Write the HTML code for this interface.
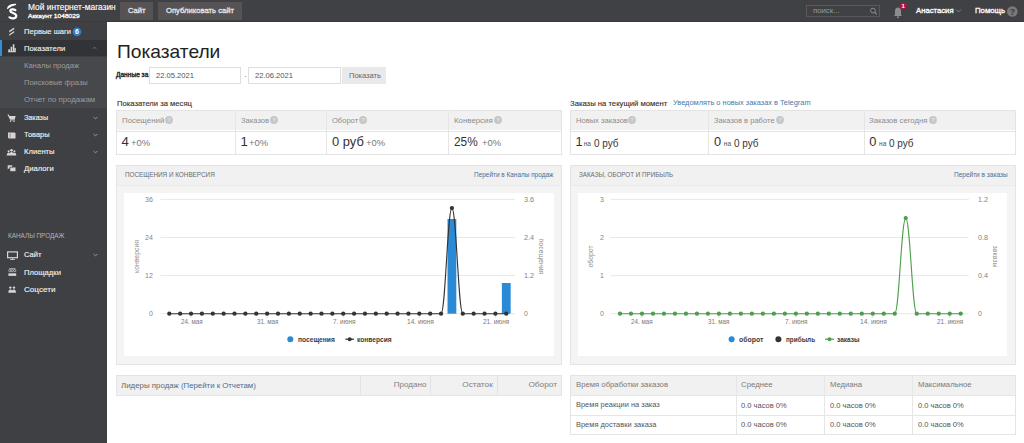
<!DOCTYPE html>
<html><head><meta charset="utf-8"><style>
html,body{margin:0;padding:0;width:1024px;height:443px;overflow:hidden;background:#fff;font-family:"Liberation Sans", sans-serif;}
.r{position:absolute;}
.t{position:absolute;white-space:nowrap;line-height:1;display:block;}
</style></head><body>
<div class="r" style="left:0.00px;top:0.00px;width:1024.00px;height:22.30px;background:#404145;"></div>
<div class="r" style="left:0.00px;top:21.30px;width:1024.00px;height:1.00px;background:#393a3d;"></div>
<div class="r" style="left:0.00px;top:22.00px;width:107.40px;height:421.00px;background:#3f4044;"></div>
<svg class="r" style="left:0;top:0" width="24" height="22"><path d="M7.6 8.4 Q8.6 4.2 15.6 4.3 Q10.8 5.4 7.6 8.4 Z" stroke="#fff" stroke-width="1.2" fill="#fff" stroke-linejoin="round"/><path d="M15.4 10.1 C14 9.1 10.3 9 10.3 11.1 C10.3 13.3 16.3 12.9 16.3 15.8 C16.3 18.9 11.2 18.9 9.5 17.3" stroke="#fff" stroke-width="2.2" fill="none" stroke-linecap="round"/></svg>
<span id="t1" class="t" style="left:27.75px;transform-origin:left;top:4.06px;font-size:8.20px;color:#fff;font-weight:400;transform:scaleX(1.0231);-webkit-text-stroke:0.12px #fff;">Мой интернет-магазин</span>
<span id="t2" class="t" style="left:27.75px;transform-origin:left;top:12.75px;font-size:6.20px;color:#fff;font-weight:400;transform:scaleX(1.0715);-webkit-text-stroke:0.3px #fff;">Аккаунт 1048029</span>
<div class="r" style="left:120.00px;top:2.00px;width:33.00px;height:18.00px;background:#575355;"></div>
<div class="r" style="left:158.00px;top:2.00px;width:84.00px;height:18.00px;background:#575355;"></div>
<span id="t3" class="t" style="left:128.00px;transform-origin:left;top:6.97px;font-size:7.60px;color:#e6e6e6;font-weight:400;transform:scaleX(1.0048);-webkit-text-stroke:0.3px #e6e6e6;">Сайт</span>
<span id="t4" class="t" style="left:166.00px;transform-origin:left;top:6.97px;font-size:7.60px;color:#e6e6e6;font-weight:400;transform:scaleX(1.0087);-webkit-text-stroke:0.3px #e6e6e6;">Опубликовать сайт</span>
<div class="r" style="left:806.30px;top:5.00px;width:73.30px;height:12.00px;background:transparent;border:1px solid #59595b;box-sizing:border-box;"></div>
<span id="t5" class="t" style="left:813.00px;transform-origin:left;top:7.27px;font-size:7.00px;color:#9a9a9a;font-weight:400;transform:scaleX(1.1083);">поиск...</span>
<svg class="r" style="left:868px;top:5px" width="12" height="12"><circle cx="5" cy="5.6" r="2.4" stroke="#8a8a8a" stroke-width="1" fill="none"/><path d="M6.8 7.4 L8.8 9.4" stroke="#8a8a8a" stroke-width="1.2"/></svg>
<svg class="r" style="left:890px;top:2px" width="20" height="18"><path d="M4 14 L5 12.5 L5 9 Q5 5.5 8 5.5 Q11 5.5 11 9 L11 12.5 L12 14 Z" fill="#8c8c8c"/><circle cx="8" cy="15.2" r="1" fill="#8c8c8c"/><circle cx="13.2" cy="4" r="3.6" fill="#a8193d"/><text x="13.2" y="6.2" font-size="6" font-weight="700" fill="#fff" text-anchor="middle" font-family="Liberation Sans">1</text></svg>
<span id="t6" class="t" style="left:916.30px;transform-origin:left;top:7.47px;font-size:7.60px;color:#fff;font-weight:400;transform:scaleX(1.0149);-webkit-text-stroke:0.3px #fff;">Анастасия</span>
<svg class="r" style="left:955px;top:8px" width="8" height="6"><path d="M1 1.5 L3.5 4 L6 1.5" stroke="#888" stroke-width="0.9" fill="none"/></svg>
<span id="t7" class="t" style="left:974.50px;transform-origin:left;top:7.47px;font-size:7.60px;color:#fff;font-weight:400;transform:scaleX(1.0258);-webkit-text-stroke:0.3px #fff;">Помощь</span>
<svg class="r" style="left:1006px;top:5px" width="14" height="14"><circle cx="6.3" cy="6.5" r="5.3" fill="#7a7878"/><text x="6.3" y="9.6" font-size="8.6" font-weight="700" fill="#3a3a3a" text-anchor="middle" font-family="Liberation Sans">?</text></svg>
<div class="r" style="left:0.00px;top:40.20px;width:107.40px;height:16.30px;background:#323337;"></div>
<div class="r" style="left:0.00px;top:40.20px;width:2.00px;height:16.30px;background:#2f8fd8;"></div>
<div class="r" style="left:0.00px;top:56.50px;width:107.40px;height:51.90px;background:#47484b;"></div>
<span id="t8" class="t" style="left:23.80px;transform-origin:left;top:27.54px;font-size:7.40px;color:#f2f2f2;font-weight:400;transform:scaleX(1.0259);-webkit-text-stroke:0.12px #f2f2f2;">Первые шаги</span>
<svg class="r" style="left:72px;top:27px" width="10" height="10"><circle cx="5" cy="4.8" r="4.4" fill="#2a7fc4"/><text x="5" y="7.3" font-size="7" font-weight="700" fill="#fff" text-anchor="middle" font-family="Liberation Sans">6</text></svg>
<span id="t9" class="t" style="left:23.80px;transform-origin:left;top:44.54px;font-size:7.40px;color:#f2f2f2;font-weight:400;transform:scaleX(1.0353);-webkit-text-stroke:0.12px #f2f2f2;">Показатели</span>
<span id="t10" class="t" style="left:23.85px;transform-origin:left;top:61.54px;font-size:7.40px;color:#9c9c9e;font-weight:400;transform:scaleX(1.0248);">Каналы продаж</span>
<span id="t11" class="t" style="left:23.85px;transform-origin:left;top:78.54px;font-size:7.40px;color:#9c9c9e;font-weight:400;transform:scaleX(1.0119);">Поисковые фразы</span>
<span id="t12" class="t" style="left:23.85px;transform-origin:left;top:95.74px;font-size:7.40px;color:#9c9c9e;font-weight:400;transform:scaleX(1.0607);">Отчет по продажам</span>
<span id="t13" class="t" style="left:24.00px;transform-origin:left;top:113.74px;font-size:7.40px;color:#f2f2f2;font-weight:400;transform:scaleX(0.9756);-webkit-text-stroke:0.12px #f2f2f2;">Заказы</span>
<span id="t14" class="t" style="left:24.00px;transform-origin:left;top:131.04px;font-size:7.40px;color:#f2f2f2;font-weight:400;transform:scaleX(1.0064);-webkit-text-stroke:0.12px #f2f2f2;">Товары</span>
<span id="t15" class="t" style="left:23.90px;transform-origin:left;top:148.44px;font-size:7.40px;color:#f2f2f2;font-weight:400;transform:scaleX(1.0324);-webkit-text-stroke:0.12px #f2f2f2;">Клиенты</span>
<span id="t16" class="t" style="left:23.90px;transform-origin:left;top:165.24px;font-size:7.40px;color:#f2f2f2;font-weight:400;transform:scaleX(1.0393);-webkit-text-stroke:0.12px #f2f2f2;">Диалоги</span>
<span id="t17" class="t" style="left:8.10px;transform-origin:left;top:233.48px;font-size:6.40px;color:#b4b4b6;font-weight:400;transform:scaleX(0.9970);">КАНАЛЫ ПРОДАЖ</span>
<span id="t18" class="t" style="left:23.70px;transform-origin:left;top:251.24px;font-size:7.40px;color:#f2f2f2;font-weight:400;transform:scaleX(1.0266);-webkit-text-stroke:0.12px #f2f2f2;">Сайт</span>
<span id="t19" class="t" style="left:23.70px;transform-origin:left;top:268.64px;font-size:7.40px;color:#f2f2f2;font-weight:400;transform:scaleX(1.0340);-webkit-text-stroke:0.12px #f2f2f2;">Площадки</span>
<span id="t20" class="t" style="left:23.70px;transform-origin:left;top:285.54px;font-size:7.40px;color:#f2f2f2;font-weight:400;transform:scaleX(1.0951);-webkit-text-stroke:0.12px #f2f2f2;">Соцсети</span>
<svg class="r" style="left:91.3px;top:45.3px" width="8" height="6"><path d="M1.8 3.8 L3.5 2.1 L5.2 3.8" stroke="#4a7fb0" stroke-width="1" fill="none"/></svg>
<svg class="r" style="left:91.5px;top:114.5px" width="8" height="6"><path d="M1.6 2 L3.5 3.9 L5.4 2" stroke="#9a9a9c" stroke-width="1" fill="none"/></svg>
<svg class="r" style="left:91.5px;top:131.5px" width="8" height="6"><path d="M1.6 2 L3.5 3.9 L5.4 2" stroke="#9a9a9c" stroke-width="1" fill="none"/></svg>
<svg class="r" style="left:91.5px;top:149.0px" width="8" height="6"><path d="M1.6 2 L3.5 3.9 L5.4 2" stroke="#9a9a9c" stroke-width="1" fill="none"/></svg>
<svg class="r" style="left:91.5px;top:252.0px" width="8" height="6"><path d="M1.6 2 L3.5 3.9 L5.4 2" stroke="#9a9a9c" stroke-width="1" fill="none"/></svg>
<svg class="r" style="left:0;top:0" width="24" height="300"><path d="M9.2 30.8 L14.2 27.6 L14.2 29.2 L9.2 32.4 Z M9.2 34.2 L14.2 31 L14.2 32.6 L9.2 35.8 Z" fill="#d9d3d3"/><path d="M8 52.3 L15.8 52.3 L15.8 51.3 L8 51.3 Z M8.4 51.3 L8.4 49.2 L10 49.2 L10 51.3 Z M10.6 51.3 L10.6 46.8 L12.2 46.8 L12.2 51.3 Z M12.8 51.3 L12.8 44.2 L14.4 44.2 L14.4 51.3 Z M14.6 51.3 L14.6 48 L15.8 48 L15.8 51.3 Z" fill="#d9d3d3"/><path d="M7.4 114.6 L8.8 114.6 L9.4 116 L15.6 116 L14.8 119.6 L10 119.6 Z" fill="#d9d3d3"/><rect x="9.8" y="119.6" width="5" height="0.8" fill="#d9d3d3"/><circle cx="10.6" cy="121.2" r="0.75" fill="#d9d3d3"/><circle cx="14" cy="121.2" r="0.75" fill="#d9d3d3"/><path d="M8 132.5 L14.6 132.5 L15.5 133.4 L15.5 138.4 L8.8 138.4 L8 137.6 Z" fill="#d9d3d3"/><path d="M10 133.5 L10 137.5" stroke="#3f4044" stroke-width="0.5"/><circle cx="11.5" cy="150.3" r="1.3" fill="#d9d3d3"/><circle cx="8.6" cy="151.3" r="1.05" fill="#d9d3d3"/><circle cx="14.4" cy="151.3" r="1.05" fill="#d9d3d3"/><path d="M6.6 155.5 Q7 152.6 8.6 152.6 Q9.6 152.6 10 153.2 Q10.6 151.8 11.5 151.8 Q12.4 151.8 13 153.2 Q13.4 152.6 14.4 152.6 Q16 152.6 16.4 155.5 Z" fill="#d9d3d3"/><path d="M7.7 165.2 L12.2 165.2 L12.2 168.6 L8.6 168.6 L7.7 169.4 Z" fill="#d9d3d3"/><path d="M10.2 167.4 L15.5 167.4 L15.5 171.2 L10.2 171.2 Z" fill="#d9d3d3"/><path d="M9.6 166.8 L12.8 166.8 L12.8 167.4 L10.2 167.4 L10.2 169.2 L9.6 169.2 Z" fill="#3f4044"/><rect x="7.6" y="251.9" width="9.8" height="5.8" stroke="#d9d3d3" stroke-width="1.2" fill="none"/><path d="M12.5 258.3 L12.5 259.3 M10.2 259.5 L14.8 259.5" stroke="#d9d3d3" stroke-width="0.9"/><path d="M9.2 268.6 L15.4 268.6" stroke="#d9d3d3" stroke-width="0.7"/><circle cx="9.8" cy="270.6" r="1.1" stroke="#d9d3d3" stroke-width="0.7" fill="none"/><circle cx="12.3" cy="270.6" r="1.1" stroke="#d9d3d3" stroke-width="0.7" fill="none"/><circle cx="14.8" cy="270.6" r="1.1" stroke="#d9d3d3" stroke-width="0.7" fill="none"/><rect x="8.4" y="273.3" width="7.8" height="2.6" fill="#d9d3d3"/><circle cx="10.3" cy="287.6" r="1.2" fill="#d9d3d3"/><circle cx="14" cy="287.6" r="1.2" fill="#d9d3d3"/><path d="M8.3 292.8 Q8.4 289.4 10.3 289.4 Q11.6 289.4 12.1 290.4 Q12.6 289.4 14 289.4 Q15.8 289.4 16 292.8 Z" fill="#d9d3d3"/></svg>
<div class="r" style="left:107.40px;top:22.30px;width:916.60px;height:420.70px;background:#ffffff;"></div>
<span id="t21" class="t" style="left:117.00px;transform-origin:left;top:42.94px;font-size:18.50px;color:#222;font-weight:400;transform:scaleX(1.0376);">Показатели</span>
<span id="t22" class="t" style="left:116.20px;transform-origin:left;top:72.14px;font-size:6.80px;color:#333;font-weight:400;transform:scaleX(0.9687);-webkit-text-stroke:0.45px #333;">Данные за</span>
<div class="r" style="left:149.30px;top:67.20px;width:91.90px;height:16.40px;background:#fff;border:1px solid #dedede;box-sizing:border-box;"></div>
<span id="t23" class="t" style="left:155.70px;transform-origin:left;top:71.54px;font-size:7.40px;color:#555;font-weight:400;transform:scaleX(1.0243);">22.05.2021</span>
<span id="t24" class="t" style="left:244.30px;transform-origin:left;top:71.57px;font-size:7.00px;color:#999;font-weight:400;">-</span>
<div class="r" style="left:248.30px;top:67.20px;width:92.30px;height:16.40px;background:#fff;border:1px solid #dedede;box-sizing:border-box;"></div>
<span id="t25" class="t" style="left:254.60px;transform-origin:left;top:71.54px;font-size:7.40px;color:#555;font-weight:400;transform:scaleX(1.0270);">22.06.2021</span>
<div class="r" style="left:342.00px;top:67.20px;width:44.20px;height:16.40px;background:#e9e9e9;"></div>
<span id="t26" class="t" style="left:349.20px;transform-origin:left;top:71.54px;font-size:7.40px;color:#666;font-weight:400;transform:scaleX(1.0152);">Показать</span>
<span id="t27" class="t" style="left:116.70px;transform-origin:left;top:99.61px;font-size:7.20px;color:#333;font-weight:400;transform:scaleX(1.0619);-webkit-text-stroke:0.12px #333;">Показатели за месяц</span>
<span id="t28" class="t" style="left:570.30px;transform-origin:left;top:99.61px;font-size:7.20px;color:#333;font-weight:400;transform:scaleX(1.0681);-webkit-text-stroke:0.12px #333;">Заказы на текущий момент</span>
<span id="t29" class="t" style="left:673.00px;transform-origin:left;top:99.54px;font-size:6.80px;color:#4a78a8;font-weight:400;transform:scaleX(1.0915);">Уведомлять о новых заказах в Telegram</span>
<div class="r" style="left:116.20px;top:110.20px;width:445.80px;height:44.40px;background:#fff;border:1px solid #e3e3e3;box-sizing:border-box;"></div><div class="r" style="left:117.20px;top:111.20px;width:443.80px;height:19.30px;background:#f1f1f1;"></div><div class="r" style="left:117.20px;top:130.50px;width:443.80px;height:0.80px;background:#e3e3e3;"></div><div class="r" style="left:235.10px;top:111.20px;width:1.00px;height:42.40px;background:#e6e6e6;"></div><div class="r" style="left:326.00px;top:111.20px;width:1.00px;height:42.40px;background:#e6e6e6;"></div><div class="r" style="left:448.25px;top:111.20px;width:1.00px;height:42.40px;background:#e6e6e6;"></div>
<div class="r" style="left:570.20px;top:110.20px;width:445.60px;height:44.40px;background:#fff;border:1px solid #e3e3e3;box-sizing:border-box;"></div><div class="r" style="left:571.20px;top:111.20px;width:443.60px;height:19.30px;background:#f1f1f1;"></div><div class="r" style="left:571.20px;top:130.50px;width:443.60px;height:0.80px;background:#e3e3e3;"></div><div class="r" style="left:708.25px;top:111.20px;width:1.00px;height:42.40px;background:#e6e6e6;"></div><div class="r" style="left:863.80px;top:111.20px;width:1.00px;height:42.40px;background:#e6e6e6;"></div>
<span id="t30" class="t" style="left:121.60px;transform-origin:left;top:116.70px;font-size:7.80px;color:#8c8c8c;font-weight:400;transform:scaleX(1.0105);">Посещений</span>
<svg class="r" style="left:164.80px;top:115.90px" width="8" height="8"><circle cx="4" cy="4" r="3.9" fill="#c6c6c6"/><text x="4" y="6.2" font-size="6" font-weight="700" fill="#e2e2e2" text-anchor="middle" font-family="Liberation Sans">?</text></svg>
<span id="t31" class="t" style="left:240.60px;transform-origin:left;top:116.70px;font-size:7.80px;color:#8c8c8c;font-weight:400;transform:scaleX(0.9707);">Заказов</span>
<svg class="r" style="left:269.50px;top:115.90px" width="8" height="8"><circle cx="4" cy="4" r="3.9" fill="#c6c6c6"/><text x="4" y="6.2" font-size="6" font-weight="700" fill="#e2e2e2" text-anchor="middle" font-family="Liberation Sans">?</text></svg>
<span id="t32" class="t" style="left:331.50px;transform-origin:left;top:116.70px;font-size:7.80px;color:#8c8c8c;font-weight:400;transform:scaleX(0.9683);">Оборот</span>
<svg class="r" style="left:358.50px;top:115.90px" width="8" height="8"><circle cx="4" cy="4" r="3.9" fill="#c6c6c6"/><text x="4" y="6.2" font-size="6" font-weight="700" fill="#e2e2e2" text-anchor="middle" font-family="Liberation Sans">?</text></svg>
<span id="t33" class="t" style="left:454.40px;transform-origin:left;top:116.70px;font-size:7.80px;color:#8c8c8c;font-weight:400;transform:scaleX(1.0081);">Конверсия</span>
<svg class="r" style="left:494.00px;top:115.90px" width="8" height="8"><circle cx="4" cy="4" r="3.9" fill="#c6c6c6"/><text x="4" y="6.2" font-size="6" font-weight="700" fill="#e2e2e2" text-anchor="middle" font-family="Liberation Sans">?</text></svg>
<span id="t34" class="t" style="left:121.60px;transform-origin:left;top:134.93px;font-size:13.20px;color:#333;font-weight:400;">4</span>
<span id="t35" class="t" style="left:131.00px;transform-origin:left;top:139.03px;font-size:9.30px;color:#777;font-weight:400;transform:scaleX(1.0119);">+0%</span>
<span id="t36" class="t" style="left:240.60px;transform-origin:left;top:134.93px;font-size:13.20px;color:#333;font-weight:400;">1</span>
<span id="t37" class="t" style="left:248.50px;transform-origin:left;top:139.03px;font-size:9.30px;color:#777;font-weight:400;transform:scaleX(1.0119);">+0%</span>
<span id="t38" class="t" style="left:331.50px;transform-origin:left;top:134.93px;font-size:13.20px;color:#333;font-weight:400;transform:scaleX(0.9789);">0 руб</span>
<span id="t39" class="t" style="left:366.20px;transform-origin:left;top:138.46px;font-size:9.50px;color:#777;font-weight:400;transform:scaleX(0.9854);">+0%</span>
<span id="t40" class="t" style="left:454.40px;transform-origin:left;top:134.93px;font-size:13.20px;color:#333;font-weight:400;transform:scaleX(0.8975);">25%</span>
<span id="t41" class="t" style="left:481.50px;transform-origin:left;top:139.03px;font-size:9.30px;color:#777;font-weight:400;transform:scaleX(1.0119);">+0%</span>
<span id="t42" class="t" style="left:575.60px;transform-origin:left;top:116.70px;font-size:7.80px;color:#8c8c8c;font-weight:400;transform:scaleX(0.9701);">Новых заказов</span>
<svg class="r" style="left:628.00px;top:115.90px" width="8" height="8"><circle cx="4" cy="4" r="3.9" fill="#c6c6c6"/><text x="4" y="6.2" font-size="6" font-weight="700" fill="#e2e2e2" text-anchor="middle" font-family="Liberation Sans">?</text></svg>
<span id="t43" class="t" style="left:714.00px;transform-origin:left;top:116.70px;font-size:7.80px;color:#8c8c8c;font-weight:400;transform:scaleX(0.9703);">Заказов в работе</span>
<svg class="r" style="left:775.50px;top:115.90px" width="8" height="8"><circle cx="4" cy="4" r="3.9" fill="#c6c6c6"/><text x="4" y="6.2" font-size="6" font-weight="700" fill="#e2e2e2" text-anchor="middle" font-family="Liberation Sans">?</text></svg>
<span id="t44" class="t" style="left:869.30px;transform-origin:left;top:116.70px;font-size:7.80px;color:#8c8c8c;font-weight:400;transform:scaleX(0.9853);">Заказов сегодня</span>
<svg class="r" style="left:928.50px;top:115.90px" width="8" height="8"><circle cx="4" cy="4" r="3.9" fill="#c6c6c6"/><text x="4" y="6.2" font-size="6" font-weight="700" fill="#e2e2e2" text-anchor="middle" font-family="Liberation Sans">?</text></svg>
<span id="t45" class="t" style="left:575.60px;transform-origin:left;top:136.36px;font-size:12.80px;color:#333;font-weight:400;">1</span>
<span id="t46" class="t" style="left:583.70px;transform-origin:left;top:140.51px;font-size:6.60px;color:#555;font-weight:400;">на</span>
<span id="t47" class="t" style="left:593.90px;transform-origin:left;top:137.56px;font-size:10.80px;color:#333;font-weight:400;transform:scaleX(0.9213);">0 руб</span>
<span id="t48" class="t" style="left:714.00px;transform-origin:left;top:136.36px;font-size:12.80px;color:#333;font-weight:400;">0</span>
<span id="t49" class="t" style="left:723.80px;transform-origin:left;top:140.51px;font-size:6.60px;color:#555;font-weight:400;">на</span>
<span id="t50" class="t" style="left:734.00px;transform-origin:left;top:137.56px;font-size:10.80px;color:#333;font-weight:400;transform:scaleX(0.9213);">0 руб</span>
<span id="t51" class="t" style="left:869.30px;transform-origin:left;top:136.36px;font-size:12.80px;color:#333;font-weight:400;">0</span>
<span id="t52" class="t" style="left:879.10px;transform-origin:left;top:140.51px;font-size:6.60px;color:#555;font-weight:400;">на</span>
<span id="t53" class="t" style="left:889.30px;transform-origin:left;top:137.56px;font-size:10.80px;color:#333;font-weight:400;transform:scaleX(0.9213);">0 руб</span>
<div class="r" style="left:116.10px;top:165.20px;width:445.90px;height:199.80px;background:#f4f4f4;border:1px solid #e4e4e4;box-sizing:border-box;"></div><div class="r" style="left:117.10px;top:166.20px;width:443.90px;height:19.10px;background:#f1f1f1;"></div><div class="r" style="left:117.10px;top:185.30px;width:443.90px;height:0.90px;background:#eaeaea;"></div><div class="r" style="left:124.30px;top:192.60px;width:429.30px;height:163.20px;background:#ffffff;"></div>
<div class="r" style="left:570.00px;top:165.20px;width:445.80px;height:199.80px;background:#f4f4f4;border:1px solid #e4e4e4;box-sizing:border-box;"></div><div class="r" style="left:571.00px;top:166.20px;width:443.80px;height:19.10px;background:#f1f1f1;"></div><div class="r" style="left:571.00px;top:185.30px;width:443.80px;height:0.90px;background:#eaeaea;"></div><div class="r" style="left:578.20px;top:192.60px;width:428.50px;height:163.20px;background:#ffffff;"></div>
<span id="t54" class="t" style="left:124.90px;transform-origin:left;top:172.46px;font-size:6.90px;color:#6a6a6a;font-weight:400;transform:scaleX(0.9199);">ПОСЕЩЕНИЯ И КОНВЕРСИЯ</span>
<span id="t55" class="t" style="left:473.75px;transform-origin:left;top:172.46px;font-size:6.90px;color:#46709a;font-weight:400;transform:scaleX(0.9349);">Перейти в Каналы продаж</span>
<span id="t56" class="t" style="left:579.00px;transform-origin:left;top:172.46px;font-size:6.90px;color:#6a6a6a;font-weight:400;transform:scaleX(0.9090);">ЗАКАЗЫ, ОБОРОТ И ПРИБЫЛЬ</span>
<span id="t57" class="t" style="left:954.00px;transform-origin:left;top:172.46px;font-size:6.90px;color:#46709a;font-weight:400;transform:scaleX(0.9432);">Перейти в заказы</span>
<svg class="r" style="left:0;top:0" width="1024" height="443"><line x1="160.50" y1="199.40" x2="515.00" y2="199.40" stroke="#e8e8e8" stroke-width="1"/><line x1="160.50" y1="237.50" x2="515.00" y2="237.50" stroke="#e8e8e8" stroke-width="1"/><line x1="160.50" y1="275.60" x2="515.00" y2="275.60" stroke="#e8e8e8" stroke-width="1"/><line x1="160.50" y1="313.70" x2="515.00" y2="313.70" stroke="#e8e8e8" stroke-width="1"/><rect x="447.52" y="219.00" width="8.8" height="94.70" fill="#2b8ad6"/><rect x="501.87" y="283.00" width="8.8" height="30.70" fill="#2b8ad6"/><line x1="191.04" y1="313.70" x2="191.04" y2="317.70" stroke="#cfcfcf" stroke-width="0.8"/><line x1="267.13" y1="313.70" x2="267.13" y2="317.70" stroke="#cfcfcf" stroke-width="0.8"/><line x1="343.22" y1="313.70" x2="343.22" y2="317.70" stroke="#cfcfcf" stroke-width="0.8"/><line x1="419.31" y1="313.70" x2="419.31" y2="317.70" stroke="#cfcfcf" stroke-width="0.8"/><line x1="495.40" y1="313.70" x2="495.40" y2="317.70" stroke="#cfcfcf" stroke-width="0.8"/><path d="M169.30 313.70 C173.65 313.70 175.82 313.70 180.17 313.70 C184.52 313.70 186.69 313.70 191.04 313.70 C195.39 313.70 197.56 313.70 201.91 313.70 C206.26 313.70 208.43 313.70 212.78 313.70 C217.13 313.70 219.30 313.70 223.65 313.70 C228.00 313.70 230.17 313.70 234.52 313.70 C238.87 313.70 241.04 313.70 245.39 313.70 C249.74 313.70 251.91 313.70 256.26 313.70 C260.61 313.70 262.78 313.70 267.13 313.70 C271.48 313.70 273.65 313.70 278.00 313.70 C282.35 313.70 284.52 313.70 288.87 313.70 C293.22 313.70 295.39 313.70 299.74 313.70 C304.09 313.70 306.26 313.70 310.61 313.70 C314.96 313.70 317.13 313.70 321.48 313.70 C325.83 313.70 328.00 313.70 332.35 313.70 C336.70 313.70 338.87 313.70 343.22 313.70 C347.57 313.70 349.74 313.70 354.09 313.70 C358.44 313.70 360.61 313.70 364.96 313.70 C369.31 313.70 371.48 313.70 375.83 313.70 C380.18 313.70 382.35 313.70 386.70 313.70 C391.05 313.70 393.22 313.70 397.57 313.70 C401.92 313.70 404.09 313.70 408.44 313.70 C412.79 313.70 414.96 313.70 419.31 313.70 C423.66 313.70 425.83 313.70 430.18 313.70 C434.53 313.70 436.70 313.70 441.05 313.70 C445.40 313.70 447.57 208.10 451.92 208.10 C456.27 208.10 458.44 313.70 462.79 313.70 C467.14 313.70 469.31 313.70 473.66 313.70 C478.01 313.70 480.18 313.70 484.53 313.70 C488.88 313.70 491.05 313.70 495.40 313.70 C499.75 313.70 501.92 313.70 506.27 313.70" fill="none" stroke="#333333" stroke-width="1.1"/><circle cx="169.30" cy="313.70" r="2.15" fill="#333333"/><circle cx="180.17" cy="313.70" r="2.15" fill="#333333"/><circle cx="191.04" cy="313.70" r="2.15" fill="#333333"/><circle cx="201.91" cy="313.70" r="2.15" fill="#333333"/><circle cx="212.78" cy="313.70" r="2.15" fill="#333333"/><circle cx="223.65" cy="313.70" r="2.15" fill="#333333"/><circle cx="234.52" cy="313.70" r="2.15" fill="#333333"/><circle cx="245.39" cy="313.70" r="2.15" fill="#333333"/><circle cx="256.26" cy="313.70" r="2.15" fill="#333333"/><circle cx="267.13" cy="313.70" r="2.15" fill="#333333"/><circle cx="278.00" cy="313.70" r="2.15" fill="#333333"/><circle cx="288.87" cy="313.70" r="2.15" fill="#333333"/><circle cx="299.74" cy="313.70" r="2.15" fill="#333333"/><circle cx="310.61" cy="313.70" r="2.15" fill="#333333"/><circle cx="321.48" cy="313.70" r="2.15" fill="#333333"/><circle cx="332.35" cy="313.70" r="2.15" fill="#333333"/><circle cx="343.22" cy="313.70" r="2.15" fill="#333333"/><circle cx="354.09" cy="313.70" r="2.15" fill="#333333"/><circle cx="364.96" cy="313.70" r="2.15" fill="#333333"/><circle cx="375.83" cy="313.70" r="2.15" fill="#333333"/><circle cx="386.70" cy="313.70" r="2.15" fill="#333333"/><circle cx="397.57" cy="313.70" r="2.15" fill="#333333"/><circle cx="408.44" cy="313.70" r="2.15" fill="#333333"/><circle cx="419.31" cy="313.70" r="2.15" fill="#333333"/><circle cx="430.18" cy="313.70" r="2.15" fill="#333333"/><circle cx="441.05" cy="313.70" r="2.15" fill="#333333"/><circle cx="451.92" cy="208.10" r="2.15" fill="#333333"/><circle cx="462.79" cy="313.70" r="2.15" fill="#333333"/><circle cx="473.66" cy="313.70" r="2.15" fill="#333333"/><circle cx="484.53" cy="313.70" r="2.15" fill="#333333"/><circle cx="495.40" cy="313.70" r="2.15" fill="#333333"/><circle cx="506.27" cy="313.70" r="2.15" fill="#333333"/></svg><span id="t58" class="t" style="right:871.20px;transform-origin:right;top:196.17px;font-size:7.00px;color:#858585;font-weight:400;">36</span><span id="t59" class="t" style="right:871.20px;transform-origin:right;top:234.27px;font-size:7.00px;color:#858585;font-weight:400;">24</span><span id="t60" class="t" style="right:871.20px;transform-origin:right;top:272.37px;font-size:7.00px;color:#858585;font-weight:400;">12</span><span id="t61" class="t" style="right:871.20px;transform-origin:right;top:310.47px;font-size:7.00px;color:#858585;font-weight:400;">0</span><span id="t62" class="t" style="left:524.00px;transform-origin:left;top:196.17px;font-size:7.00px;color:#858585;font-weight:400;transform:scaleX(1.0376);">3.6</span><span id="t63" class="t" style="left:524.00px;transform-origin:left;top:234.27px;font-size:7.00px;color:#858585;font-weight:400;transform:scaleX(1.0376);">2.4</span><span id="t64" class="t" style="left:524.00px;transform-origin:left;top:272.37px;font-size:7.00px;color:#858585;font-weight:400;transform:scaleX(1.0376);">1.2</span><span id="t65" class="t" style="left:524.00px;transform-origin:left;top:310.47px;font-size:7.00px;color:#858585;font-weight:400;">0</span>
<svg class="r" style="left:0;top:0" width="1024" height="443"><line x1="610.60" y1="199.40" x2="968.75" y2="199.40" stroke="#e8e8e8" stroke-width="1"/><line x1="610.60" y1="237.50" x2="968.75" y2="237.50" stroke="#e8e8e8" stroke-width="1"/><line x1="610.60" y1="275.60" x2="968.75" y2="275.60" stroke="#e8e8e8" stroke-width="1"/><line x1="610.60" y1="313.70" x2="968.75" y2="313.70" stroke="#e8e8e8" stroke-width="1"/><line x1="641.98" y1="313.70" x2="641.98" y2="317.70" stroke="#cfcfcf" stroke-width="0.8"/><line x1="718.91" y1="313.70" x2="718.91" y2="317.70" stroke="#cfcfcf" stroke-width="0.8"/><line x1="795.84" y1="313.70" x2="795.84" y2="317.70" stroke="#cfcfcf" stroke-width="0.8"/><line x1="872.77" y1="313.70" x2="872.77" y2="317.70" stroke="#cfcfcf" stroke-width="0.8"/><line x1="949.70" y1="313.70" x2="949.70" y2="317.70" stroke="#cfcfcf" stroke-width="0.8"/><path d="M620.00 313.70 C624.40 313.70 626.59 313.70 630.99 313.70 C635.39 313.70 637.58 313.70 641.98 313.70 C646.38 313.70 648.57 313.70 652.97 313.70 C657.37 313.70 659.56 313.70 663.96 313.70 C668.36 313.70 670.55 313.70 674.95 313.70 C679.35 313.70 681.54 313.70 685.94 313.70 C690.34 313.70 692.53 313.70 696.93 313.70 C701.33 313.70 703.52 313.70 707.92 313.70 C712.32 313.70 714.51 313.70 718.91 313.70 C723.31 313.70 725.50 313.70 729.90 313.70 C734.30 313.70 736.49 313.70 740.89 313.70 C745.29 313.70 747.48 313.70 751.88 313.70 C756.28 313.70 758.47 313.70 762.87 313.70 C767.27 313.70 769.46 313.70 773.86 313.70 C778.26 313.70 780.45 313.70 784.85 313.70 C789.25 313.70 791.44 313.70 795.84 313.70 C800.24 313.70 802.43 313.70 806.83 313.70 C811.23 313.70 813.42 313.70 817.82 313.70 C822.22 313.70 824.41 313.70 828.81 313.70 C833.21 313.70 835.40 313.70 839.80 313.70 C844.20 313.70 846.39 313.70 850.79 313.70 C855.19 313.70 857.38 313.70 861.78 313.70 C866.18 313.70 868.37 313.70 872.77 313.70 C877.17 313.70 879.36 313.70 883.76 313.70 C888.16 313.70 890.35 313.70 894.75 313.70 C899.15 313.70 901.34 218.10 905.74 218.10 C910.14 218.10 912.33 313.70 916.73 313.70 C921.13 313.70 923.32 313.70 927.72 313.70 C932.12 313.70 934.31 313.70 938.71 313.70 C943.11 313.70 945.30 313.70 949.70 313.70 C954.10 313.70 956.29 313.70 960.69 313.70" fill="none" stroke="#4c9e4c" stroke-width="1.1"/><circle cx="620.00" cy="313.70" r="2.15" fill="#4c9e4c"/><circle cx="630.99" cy="313.70" r="2.15" fill="#4c9e4c"/><circle cx="641.98" cy="313.70" r="2.15" fill="#4c9e4c"/><circle cx="652.97" cy="313.70" r="2.15" fill="#4c9e4c"/><circle cx="663.96" cy="313.70" r="2.15" fill="#4c9e4c"/><circle cx="674.95" cy="313.70" r="2.15" fill="#4c9e4c"/><circle cx="685.94" cy="313.70" r="2.15" fill="#4c9e4c"/><circle cx="696.93" cy="313.70" r="2.15" fill="#4c9e4c"/><circle cx="707.92" cy="313.70" r="2.15" fill="#4c9e4c"/><circle cx="718.91" cy="313.70" r="2.15" fill="#4c9e4c"/><circle cx="729.90" cy="313.70" r="2.15" fill="#4c9e4c"/><circle cx="740.89" cy="313.70" r="2.15" fill="#4c9e4c"/><circle cx="751.88" cy="313.70" r="2.15" fill="#4c9e4c"/><circle cx="762.87" cy="313.70" r="2.15" fill="#4c9e4c"/><circle cx="773.86" cy="313.70" r="2.15" fill="#4c9e4c"/><circle cx="784.85" cy="313.70" r="2.15" fill="#4c9e4c"/><circle cx="795.84" cy="313.70" r="2.15" fill="#4c9e4c"/><circle cx="806.83" cy="313.70" r="2.15" fill="#4c9e4c"/><circle cx="817.82" cy="313.70" r="2.15" fill="#4c9e4c"/><circle cx="828.81" cy="313.70" r="2.15" fill="#4c9e4c"/><circle cx="839.80" cy="313.70" r="2.15" fill="#4c9e4c"/><circle cx="850.79" cy="313.70" r="2.15" fill="#4c9e4c"/><circle cx="861.78" cy="313.70" r="2.15" fill="#4c9e4c"/><circle cx="872.77" cy="313.70" r="2.15" fill="#4c9e4c"/><circle cx="883.76" cy="313.70" r="2.15" fill="#4c9e4c"/><circle cx="894.75" cy="313.70" r="2.15" fill="#4c9e4c"/><circle cx="905.74" cy="218.10" r="2.15" fill="#4c9e4c"/><circle cx="916.73" cy="313.70" r="2.15" fill="#4c9e4c"/><circle cx="927.72" cy="313.70" r="2.15" fill="#4c9e4c"/><circle cx="938.71" cy="313.70" r="2.15" fill="#4c9e4c"/><circle cx="949.70" cy="313.70" r="2.15" fill="#4c9e4c"/><circle cx="960.69" cy="313.70" r="2.15" fill="#4c9e4c"/></svg><span id="t66" class="t" style="right:420.00px;transform-origin:right;top:196.17px;font-size:7.00px;color:#858585;font-weight:400;">3</span><span id="t67" class="t" style="right:420.00px;transform-origin:right;top:234.27px;font-size:7.00px;color:#858585;font-weight:400;">2</span><span id="t68" class="t" style="right:420.00px;transform-origin:right;top:272.37px;font-size:7.00px;color:#858585;font-weight:400;">1</span><span id="t69" class="t" style="right:420.00px;transform-origin:right;top:310.47px;font-size:7.00px;color:#858585;font-weight:400;">0</span><span id="t70" class="t" style="left:978.00px;transform-origin:left;top:196.17px;font-size:7.00px;color:#858585;font-weight:400;transform:scaleX(1.0376);">1.2</span><span id="t71" class="t" style="left:978.00px;transform-origin:left;top:234.27px;font-size:7.00px;color:#858585;font-weight:400;transform:scaleX(1.0376);">0.8</span><span id="t72" class="t" style="left:978.00px;transform-origin:left;top:272.37px;font-size:7.00px;color:#858585;font-weight:400;transform:scaleX(1.0376);">0.4</span><span id="t73" class="t" style="left:978.00px;transform-origin:left;top:310.47px;font-size:7.00px;color:#858585;font-weight:400;">0</span>
<span id="t74" class="t" style="left:181.00px;transform-origin:left;top:319.18px;font-size:6.40px;color:#7a7a7a;font-weight:400;transform:scaleX(0.9829);">24. мая</span>
<span id="t75" class="t" style="left:631.43px;transform-origin:left;top:319.18px;font-size:6.40px;color:#7a7a7a;font-weight:400;transform:scaleX(0.9829);">24. мая</span>
<span id="t76" class="t" style="left:257.25px;transform-origin:left;top:319.18px;font-size:6.40px;color:#7a7a7a;font-weight:400;transform:scaleX(0.9715);">31. мая</span>
<span id="t77" class="t" style="left:708.48px;transform-origin:left;top:319.18px;font-size:6.40px;color:#7a7a7a;font-weight:400;transform:scaleX(0.9715);">31. мая</span>
<span id="t78" class="t" style="left:332.50px;transform-origin:left;top:319.18px;font-size:6.40px;color:#7a7a7a;font-weight:400;transform:scaleX(1.0014);">7. июня</span>
<span id="t79" class="t" style="left:784.89px;transform-origin:left;top:319.18px;font-size:6.40px;color:#7a7a7a;font-weight:400;transform:scaleX(1.0014);">7. июня</span>
<span id="t80" class="t" style="left:406.90px;transform-origin:left;top:319.18px;font-size:6.40px;color:#7a7a7a;font-weight:400;transform:scaleX(1.0302);">14. июня</span>
<span id="t81" class="t" style="left:859.67px;transform-origin:left;top:319.18px;font-size:6.40px;color:#7a7a7a;font-weight:400;transform:scaleX(1.0302);">14. июня</span>
<span id="t82" class="t" style="left:483.10px;transform-origin:left;top:319.18px;font-size:6.40px;color:#7a7a7a;font-weight:400;transform:scaleX(1.0090);">21. июня</span>
<span id="t83" class="t" style="left:936.88px;transform-origin:left;top:319.18px;font-size:6.40px;color:#7a7a7a;font-weight:400;transform:scaleX(1.0090);">21. июня</span>
<div id="t84" class="t" style="left:112.00px;top:252.85px;width:50.00px;font-size:6.90px;color:#8a8a8a;text-align:center;transform:rotate(-90deg);transform-origin:center;height:6.90px;line-height:6.90px">конверсия</div>
<div id="t85" class="t" style="left:515.60px;top:253.05px;width:50.00px;font-size:6.90px;color:#8a8a8a;text-align:center;transform:rotate(90deg);transform-origin:center;height:6.90px;line-height:6.90px">посещения</div>
<div id="t86" class="t" style="left:565.90px;top:253.35px;width:50.00px;font-size:6.90px;color:#8a8a8a;text-align:center;transform:rotate(-90deg);transform-origin:center;height:6.90px;line-height:6.90px">оборот</div>
<div id="t87" class="t" style="left:969.90px;top:253.05px;width:50.00px;font-size:6.90px;color:#8a8a8a;text-align:center;transform:rotate(90deg);transform-origin:center;height:6.90px;line-height:6.90px">заказы</div>
<svg class="r" style="left:0;top:330px" width="1024" height="20"><circle cx="290.3" cy="9.2" r="3" fill="#2b8ad6"/><line x1="345.3" y1="9.2" x2="354" y2="9.2" stroke="#333" stroke-width="1.2"/><circle cx="349.7" cy="9.2" r="2" fill="#333"/><circle cx="731.6" cy="9.2" r="3" fill="#2b8ad6"/><circle cx="778.4" cy="9.2" r="3" fill="#333"/><line x1="825" y1="9.2" x2="834" y2="9.2" stroke="#4c9e4c" stroke-width="1.2"/><circle cx="829.5" cy="9.2" r="2" fill="#4c9e4c"/></svg>
<span id="t88" class="t" style="left:297.80px;transform-origin:left;top:336.98px;font-size:6.40px;color:#3a3a3a;font-weight:700;transform:scaleX(1.0435);">посещения</span>
<span id="t89" class="t" style="left:357.00px;transform-origin:left;top:336.98px;font-size:6.40px;color:#3a3a3a;font-weight:700;transform:scaleX(1.0357);">конверсия</span>
<span id="t90" class="t" style="left:739.00px;transform-origin:left;top:336.98px;font-size:6.40px;color:#3a3a3a;font-weight:700;transform:scaleX(1.0778);">оборот</span>
<span id="t91" class="t" style="left:786.00px;transform-origin:left;top:336.98px;font-size:6.40px;color:#3a3a3a;font-weight:700;transform:scaleX(1.0002);">прибыль</span>
<span id="t92" class="t" style="left:837.00px;transform-origin:left;top:336.98px;font-size:6.40px;color:#3a3a3a;font-weight:700;transform:scaleX(1.0215);">заказы</span>
<div class="r" style="left:116.20px;top:375.00px;width:445.80px;height:20.60px;background:#f1f1f1;border:1px solid #e4e4e4;box-sizing:border-box;"></div>
<div class="r" style="left:360.20px;top:376.00px;width:1.00px;height:18.60px;background:#e2e2e2;"></div>
<div class="r" style="left:430.20px;top:376.00px;width:1.00px;height:18.60px;background:#e2e2e2;"></div>
<div class="r" style="left:497.10px;top:376.00px;width:1.00px;height:18.60px;background:#e2e2e2;"></div>
<span id="t93" class="t" style="left:121.30px;transform-origin:left;top:381.55px;font-size:7.50px;color:#6a6a6a;font-weight:400;transform:scaleX(1.0506);">Лидеры продаж</span>
<span id="t94" class="t" style="left:181.00px;transform-origin:left;top:381.55px;font-size:7.50px;color:#3f6e9e;font-weight:400;transform:scaleX(1.0396);">(Перейти к Отчетам)</span>
<span id="t95" class="t" style="right:597.80px;transform-origin:right;top:381.25px;font-size:7.50px;color:#808080;font-weight:400;transform:scaleX(1.0710);">Продано</span>
<span id="t96" class="t" style="right:531.00px;transform-origin:right;top:381.25px;font-size:7.50px;color:#808080;font-weight:400;transform:scaleX(1.0991);">Остаток</span>
<span id="t97" class="t" style="right:467.40px;transform-origin:right;top:381.25px;font-size:7.50px;color:#808080;font-weight:400;transform:scaleX(1.0995);">Оборот</span>
<div class="r" style="left:570.20px;top:375.20px;width:445.50px;height:59.80px;background:#fff;border:1px solid #e4e4e4;box-sizing:border-box;"></div>
<div class="r" style="left:571.20px;top:376.20px;width:443.50px;height:19.10px;background:#f1f1f1;"></div>
<div class="r" style="left:571.20px;top:395.30px;width:443.50px;height:0.80px;background:#e6e6e6;"></div>
<div class="r" style="left:571.20px;top:415.00px;width:443.50px;height:0.80px;background:#e6e6e6;"></div>
<div class="r" style="left:735.90px;top:376.20px;width:1.00px;height:57.80px;background:#e6e6e6;"></div>
<div class="r" style="left:824.20px;top:376.20px;width:1.00px;height:57.80px;background:#e6e6e6;"></div>
<div class="r" style="left:912.40px;top:376.20px;width:1.00px;height:57.80px;background:#e6e6e6;"></div>
<span id="t98" class="t" style="left:575.80px;transform-origin:left;top:381.44px;font-size:7.40px;color:#7a7a7a;font-weight:400;transform:scaleX(1.0442);">Время обработки заказов</span>
<span id="t99" class="t" style="left:740.90px;transform-origin:left;top:381.44px;font-size:7.40px;color:#7a7a7a;font-weight:400;transform:scaleX(1.0561);">Среднее</span>
<span id="t100" class="t" style="left:829.60px;transform-origin:left;top:381.44px;font-size:7.40px;color:#7a7a7a;font-weight:400;transform:scaleX(1.0343);">Медиана</span>
<span id="t101" class="t" style="left:918.00px;transform-origin:left;top:381.44px;font-size:7.40px;color:#7a7a7a;font-weight:400;transform:scaleX(1.0478);">Максимальное</span>
<span id="t102" class="t" style="left:575.80px;transform-origin:left;top:401.34px;font-size:7.40px;color:#555;font-weight:400;transform:scaleX(1.0090);">Время реакции на заказ</span>
<span id="t103" class="t" style="left:575.80px;transform-origin:left;top:421.04px;font-size:7.40px;color:#555;font-weight:400;transform:scaleX(1.0089);">Время доставки заказа</span>
<span id="t104" class="t" style="left:740.90px;transform-origin:left;top:401.74px;font-size:7.40px;color:#555;font-weight:400;transform:scaleX(1.0191);">0.0 часов 0%</span>
<span id="t105" class="t" style="left:829.60px;transform-origin:left;top:401.74px;font-size:7.40px;color:#555;font-weight:400;transform:scaleX(1.0191);">0.0 часов 0%</span>
<span id="t106" class="t" style="left:918.00px;transform-origin:left;top:401.74px;font-size:7.40px;color:#555;font-weight:400;transform:scaleX(1.0191);">0.0 часов 0%</span>
<span id="t107" class="t" style="left:740.90px;transform-origin:left;top:421.44px;font-size:7.40px;color:#555;font-weight:400;transform:scaleX(1.0191);">0.0 часов 0%</span>
<span id="t108" class="t" style="left:829.60px;transform-origin:left;top:421.44px;font-size:7.40px;color:#555;font-weight:400;transform:scaleX(1.0191);">0.0 часов 0%</span>
<span id="t109" class="t" style="left:918.00px;transform-origin:left;top:421.44px;font-size:7.40px;color:#555;font-weight:400;transform:scaleX(1.0191);">0.0 часов 0%</span>
</body></html>
